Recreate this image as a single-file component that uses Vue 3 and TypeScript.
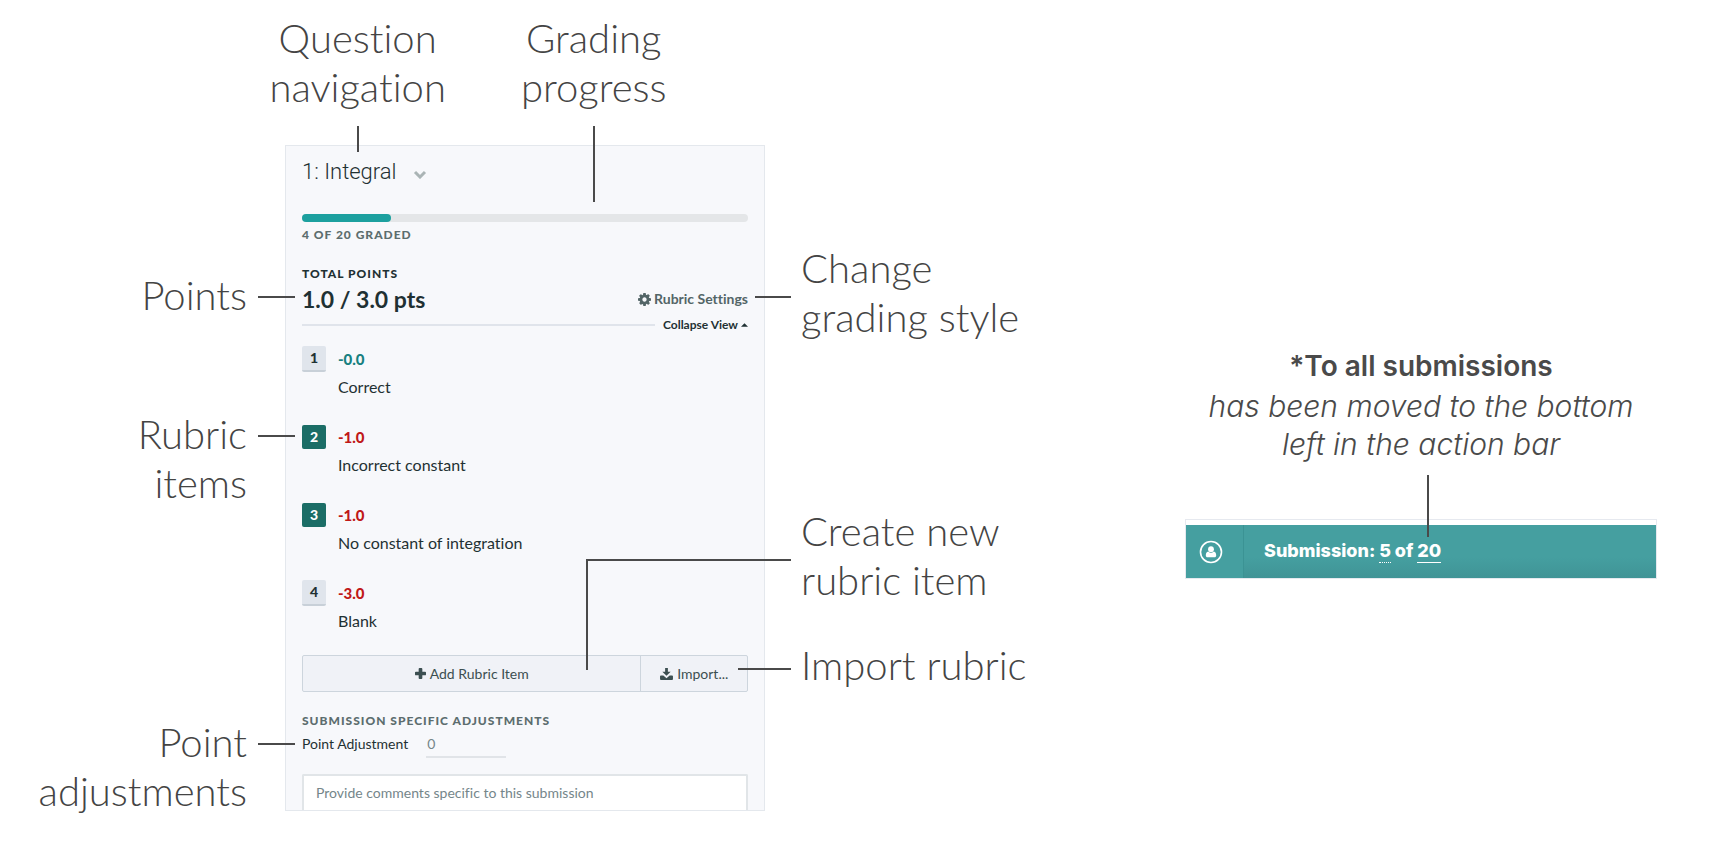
<script setup lang="ts">
import { computed, ref } from 'vue'

interface RubricItem {
  key: number
  points: string
  label: string
  applied: boolean
  positive?: boolean
}

const graded = 4
const total = 20
const progress = computed(() => `${(graded / total) * 100}%`)

const items = ref<RubricItem[]>([
  { key: 1, points: '-0.0', label: 'Correct', applied: false, positive: true },
  { key: 2, points: '-1.0', label: 'Incorrect constant', applied: true },
  { key: 3, points: '-1.0', label: 'No constant of integration', applied: true },
  { key: 4, points: '-3.0', label: 'Blank', applied: false },
])

const adjustment = ref('')
const comments = ref('')
</script>

<template>
  <main class="guide">
    <header class="top-labels">
      <p class="callout down short">Question<br />navigation</p>
      <p class="callout down long">Grading<br />progress</p>
    </header>

    <div class="left-labels">
      <p class="callout to-right points">Points</p>
      <p class="callout to-right rubric">Rubric<br />items</p>
      <p class="callout to-right adjust">Point<br />adjustments</p>
    </div>

    <section class="panel">
      <button type="button" class="question">
        1: Integral
        <svg class="chevron" viewBox="0 0 14 9" aria-hidden="true">
          <path d="M2 2l5 5 5-5" fill="none" stroke="currentColor" stroke-width="3" />
        </svg>
      </button>

      <div class="track"><div class="fill" :style="{ width: progress }"></div></div>
      <p class="caps muted graded">{{ graded }} OF {{ total }} GRADED</p>

      <p class="caps total">TOTAL POINTS</p>
      <div class="score-row">
        <strong class="score">1.0 / 3.0 pts</strong>
        <button type="button" class="settings">
          <svg class="cog" viewBox="0 128 1536 1536" aria-hidden="true">
            <path
              fill="currentColor"
              d="M1024 896q0-106-75-181t-181-75-181 75-75 181 75 181 181 75 181-75 75-181zm512-109v222q0 12-8 23t-20 13l-185 28q-19 54-39 91 35 50 107 138 10 12 10 25t-9 23q-27 37-99 108t-94 71q-12 0-26-9l-138-108q-44 23-91 38-16 136-29 186-7 28-36 28h-222q-14 0-24.500-8.500t-11.500-21.500l-28-184q-49-16-90-37l-141 107q-10 9-25 9-14 0-25-11-126-114-165-168-7-10-7-23 0-12 8-23 15-21 51-66.500t54-70.500q-27-50-41-99l-183-27q-13-2-21-12.500t-8-23.500v-222q0-12 8-23t19-13l186-28q14-46 39-92-40-57-107-138-10-12-10-24 0-10 9-23 26-36 98.500-107.500t94.500-71.500q13 0 26 10l138 107q44-23 91-38 16-136 29-186 7-28 36-28h222q14 0 24.500 8.500t11.500 21.500l28 184q49 16 90 37l142-107q9-9 24-9 13 0 25 10 129 119 165 170 7 8 7 22 0 12-8 23-15 21-51 66.500t-54 70.500q26 50 41 98l183 28q13 2 21 12.500t8 23.500z"
            />
          </svg>
          Rubric Settings
        </button>
      </div>
      <div class="collapse-row">
        <hr class="rule" />
        <button type="button" class="collapse">
          Collapse View
          <svg class="caret" viewBox="0 0 8 4" aria-hidden="true"><path d="M0 4l4-4 4 4z" fill="currentColor" /></svg>
        </button>
      </div>

      <ol class="items">
        <li v-for="item in items" :key="item.key" class="item">
          <button
            type="button"
            class="key"
            :class="{ applied: item.applied }"
            :aria-pressed="item.applied"
            @click="item.applied = !item.applied"
          >
            {{ item.key }}
          </button>
          <div class="item-body">
            <strong class="item-points" :class="{ positive: item.positive }">{{ item.points }}</strong>
            <span class="item-label">{{ item.label }}</span>
          </div>
        </li>
      </ol>

      <div class="actions">
        <button type="button" class="action add">
          <svg class="plus" viewBox="0 0 12 12" aria-hidden="true">
            <path d="M5 0h2a1 1 0 0 1 1 1v3h3a1 1 0 0 1 1 1v2a1 1 0 0 1-1 1H8v3a1 1 0 0 1-1 1H5a1 1 0 0 1-1-1V8H1a1 1 0 0 1-1-1V5a1 1 0 0 1 1-1h3V1a1 1 0 0 1 1-1z" fill="currentColor" />
          </svg>
          Add Rubric Item
        </button>
        <button type="button" class="action import">
          <svg class="download" viewBox="0 0 14 13" aria-hidden="true">
            <path d="M5.500 0h3v4h3L7 8.500 2.500 4h3z" fill="currentColor" />
            <path d="M1 8h2.600L7 11l3.400-3H13a1 1 0 0 1 1 1v3a1 1 0 0 1-1 1H1a1 1 0 0 1-1-1V9a1 1 0 0 1 1-1z" fill="currentColor" />
          </svg>
          Import...
        </button>
      </div>

      <h2 class="caps muted adjustments">SUBMISSION SPECIFIC ADJUSTMENTS</h2>
      <div class="adjust-row">
        <label for="point-adjustment">Point Adjustment</label>
        <input id="point-adjustment" v-model="adjustment" type="text" placeholder="0" />
      </div>
      <textarea
        v-model="comments"
        class="comments"
        rows="1"
        aria-label="Comments"
        placeholder="Provide comments specific to this submission"
      ></textarea>
    </section>

    <div class="right-labels">
      <p class="callout to-left change">Change<br />grading style</p>
      <p class="callout to-left create">Create new<br />rubric item</p>
      <p class="callout to-left import-label">Import rubric</p>
    </div>

    <aside class="note">
      <h2 class="note-title">*To all submissions</h2>
      <p class="note-text">has been moved to the bottom<br />left in the action bar</p>
      <div class="bar">
        <button type="button" class="person" aria-label="Student">
          <svg class="person-icon" viewBox="0 0 24 24" aria-hidden="true">
            <circle cx="12" cy="12" r="10.500" fill="none" stroke="currentColor" stroke-width="1.600" />
            <circle cx="12" cy="9.200" r="2.900" fill="currentColor" />
            <path d="M9.200 11.600a4.200 4.200 0 0 0 5.600 0c1.600.4 2.400 1.700 2.400 3.900 0 1.100-.7 1.800-1.700 1.800h-7c-1 0-1.700-.7-1.700-1.800 0-2.200.8-3.500 2.400-3.900z" fill="currentColor" />
          </svg>
        </button>
        <p class="submission">
          Submission: <a href="#current" class="current">5</a> of <a href="#all" class="all">20</a>
        </p>
      </div>
    </aside>
  </main>
</template>

<style>
body {
  margin: 0;
  background: #fff;
}
</style>

<style scoped>
.guide {
  display: grid;
  grid-template-columns:
    minmax(0, 285fr) minmax(0, 480fr) minmax(0, 420fr)
    minmax(0, 472fr) minmax(0, 59fr);
  align-items: start;
  padding: 14px 0 32px;
  font-family: Lato, "Open Sans", sans-serif;
  font-variant-ligatures: none;
  color: #1f3133;
}

p,
h2,
ol {
  margin: 0;
  padding: 0;
}

button {
  margin: 0;
  padding: 0;
  border: 0;
  background: none;
  color: inherit;
  font: inherit;
  cursor: pointer;
}

/* Callout labels and their leader lines */
.callout {
  position: relative;
  font-size: 40px;
  font-weight: 300;
  line-height: 49px;
  color: #444;
  white-space: nowrap;
}

.callout::after {
  content: "";
  position: absolute;
  box-sizing: border-box;
  border: 0 solid #4a4a4a;
}

.top-labels {
  grid-column: 1 / -1;
  display: flex;
  gap: 75px;
  padding: 0 0 33px 15.7%;
  text-align: center;
}

.down::after {
  top: 112px;
  left: calc(50% - 1px);
  border-left-width: 2px;
}

.short::after {
  height: 26px;
}

.long::after {
  height: 76px;
}

.left-labels {
  display: flex;
  flex-direction: column;
  align-items: flex-end;
  padding-right: 38px;
  text-align: right;
}

.to-right::after {
  top: 25px;
  left: calc(100% + 11px);
  width: 37px;
  border-top-width: 2px;
}

.points {
  margin-top: 126px;
}

.rubric {
  margin-top: 90px;
}

.adjust {
  margin-top: 210px;
}

.right-labels {
  padding-left: 36px;
}

.to-left::after {
  top: 52px;
  right: calc(100% + 10px);
  width: 36px;
  border-top-width: 2px;
}

.change {
  margin-top: 99px;
}

.create {
  margin-top: 165px;
}

.create::after {
  width: 205px;
  height: 111px;
  border-left-width: 2px;
}

.import-label {
  margin-top: 36px;
}

.import-label::after {
  top: 27px;
  width: 53px;
}

/* Rubric panel */
.panel {
  display: flex;
  flex-direction: column;
  padding: 12px 16px 0;
  border: 1px solid #e4e8ed;
  background: #f7f8fb;
}

.question {
  display: flex;
  align-items: center;
  gap: 16px;
  align-self: flex-start;
  font-family: Roboto, sans-serif;
  font-size: 22px;
  font-weight: 300;
  line-height: 28px;
}

.chevron {
  width: 14px;
  height: 9px;
  margin-top: 4px;
  color: #aab4b5;
}

.track {
  height: 8px;
  margin-top: 28px;
  border-radius: 4px;
  background: #e4e6e8;
}

.fill {
  height: 8px;
  border-radius: 4px;
  background: #1ca09f;
}

.caps {
  font-size: 12px;
  font-weight: 900;
  line-height: 16px;
  letter-spacing: 1px;
}

.muted {
  color: #5c6d6e;
}

.graded {
  margin-top: 5px;
}

.total {
  margin-top: 23px;
}

.score-row {
  display: flex;
  align-items: center;
  justify-content: space-between;
  margin-top: 2px;
}

.score {
  font-size: 23px;
  font-weight: 700;
  line-height: 30px;
}

.settings {
  display: flex;
  align-items: center;
  gap: 3px;
  font-size: 14px;
  font-weight: 700;
  line-height: 18px;
  color: #536567;
}

.cog {
  width: 13px;
  height: 13px;
}

.collapse-row {
  display: flex;
  align-items: center;
  gap: 8px;
  margin-top: 3px;
}

.rule {
  flex: 1;
  height: 2px;
  margin: 0;
  border: 0;
  background: #e0e4eb;
}

.collapse {
  display: flex;
  align-items: center;
  gap: 3px;
  font-size: 12px;
  font-weight: 700;
  line-height: 16px;
}

.caret {
  width: 7px;
  height: 4px;
}

.items {
  display: grid;
  gap: 27px;
  margin-top: 13px;
  list-style: none;
}

.item {
  display: flex;
  align-items: flex-start;
  gap: 12px;
}

.key {
  width: 24px;
  height: 26px;
  border-bottom: 2px solid #c8d0d8;
  border-radius: 2px;
  background: #e0e5ec;
  font-size: 14px;
  font-weight: 900;
  line-height: 24px;
}

.key.applied {
  height: 24px;
  margin-top: 1px;
  border-bottom: 0;
  background: #1b6d66;
  color: #fff;
}

.item-body {
  display: grid;
  gap: 8px;
  padding-top: 3px;
}

.item-points {
  font-size: 15px;
  font-weight: 900;
  line-height: 20px;
  color: #c01818;
}

.item-points.positive {
  color: #178080;
}

.item-label {
  font-size: 16px;
  line-height: 20px;
}

.actions {
  display: flex;
  margin-top: 24px;
  border: 1px solid #cdd5dd;
  border-radius: 2px;
  background: #f0f2f7;
  color: #3c4f51;
}

.action {
  display: flex;
  align-items: center;
  justify-content: center;
  gap: 4px;
  font-size: 14px;
  line-height: 35px;
}

.add {
  flex: 339;
}

.import {
  flex: 106;
  border-left: 1px solid #cdd5dd;
}

.plus {
  width: 11px;
  height: 11px;
}

.download {
  width: 13px;
  height: 12px;
}

.adjustments {
  margin-top: 21px;
}

.adjust-row {
  display: flex;
  gap: 18px;
  margin-top: 2px;
  font-size: 14px;
  line-height: 25px;
}

.adjust-row input {
  box-sizing: border-box;
  width: 80px;
  height: 27px;
  padding: 0 1px;
  border: 0;
  border-bottom: 2px solid #e1e4e8;
  border-radius: 0;
  background: none;
  color: inherit;
  font: inherit;
}

.adjust-row input::placeholder,
.comments::placeholder {
  color: #75868a;
  opacity: 1;
}

.comments {
  box-sizing: border-box;
  width: 100%;
  height: 36px;
  margin-top: 16px;
  padding: 8px 12px;
  border: 2px solid #e1e5e8;
  border-bottom: 0;
  border-radius: 2px 2px 0 0;
  background: #fff;
  color: inherit;
  font: inherit;
  font-size: 14px;
  line-height: 18px;
  resize: none;
  overflow: hidden;
}

/* Action bar note */
.note {
  padding-top: 201px;
  font-family: Inter, "Open Sans", sans-serif;
  color: #4a4a4a;
  text-align: center;
}

.note-title {
  font-size: 28px;
  font-weight: 600;
  line-height: 40px;
}

.note-text {
  margin-top: 1px;
  font-size: 30px;
  font-style: italic;
  font-weight: 300;
  line-height: 38px;
  white-space: nowrap;
}

.bar {
  display: flex;
  margin-top: 56px;
  padding-top: 5px;
  border: 1px solid #e6e9ef;
  color: #fff;
}

.person {
  display: flex;
  align-items: center;
  justify-content: center;
  width: 58px;
  height: 53px;
  padding-right: 8px;
  border-right: 1px solid #3b9394;
  background: #459fa0;
}

.person-icon {
  width: 24px;
  height: 24px;
}

.submission {
  flex: 1;
  padding-left: 20px;
  background: linear-gradient(#459fa0 60%, #409496);
  font-size: 18px;
  font-weight: 800;
  line-height: 51px;
  text-align: left;
}

.submission a {
  display: inline-block;
  color: inherit;
  line-height: 22px;
  text-decoration: none;
}

.current {
  border-bottom: 1px dotted #fff;
}

.all {
  position: relative;
  border-bottom: 1px solid #fff;
}

/* Leader line from the note down to the submission total */
.all::before {
  content: "";
  position: absolute;
  bottom: calc(100% + 3px);
  left: calc(50% - 2px);
  height: 62px;
  border-left: 2px solid #4a4a4a;
}
</style>
